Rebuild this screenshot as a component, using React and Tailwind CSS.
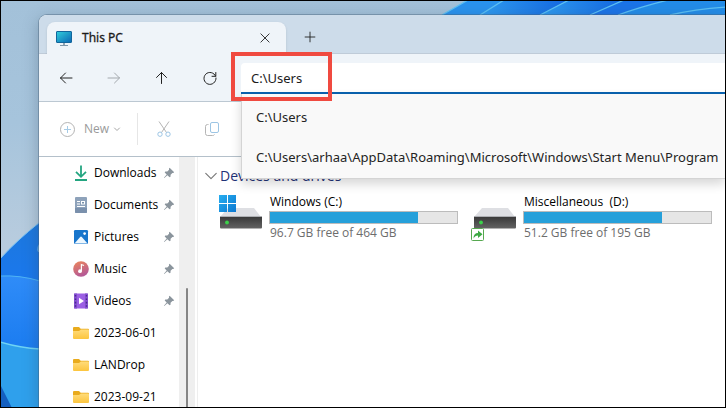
import React from "react";

function Wallpaper() {
  return (
    <svg className="absolute inset-0 h-full w-full" viewBox="1 1 724 406" preserveAspectRatio="xMinYMin slice" aria-hidden="true">
      <defs>
        <linearGradient id="sky" x1="0" y1="0" x2="0" y2="1">
          <stop offset="0" stopColor="#a3c1d9" />
          <stop offset="0.3" stopColor="#a6c4dc" />
          <stop offset="0.6" stopColor="#b8ccde" />
        </linearGradient>
        <linearGradient id="petal" x1="0" y1="0" x2="0" y2="1">
          <stop offset="0" stopColor="#1d78dc" />
          <stop offset="1" stopColor="#1a78f0" />
        </linearGradient>
        <linearGradient id="petalMid" x1="0" y1="0" x2="0" y2="1">
          <stop offset="0" stopColor="#2f8cf8" />
          <stop offset="1" stopColor="#1b7cf0" />
        </linearGradient>
        <linearGradient id="sweep" x1="0" y1="0" x2="1" y2="0">
          <stop offset="0" stopColor="#2f9cf0" />
          <stop offset="1" stopColor="#1467e0" />
        </linearGradient>
      </defs>
      <rect width="726" height="408" fill="url(#sky)" />
      <path d="M0 259 Q16 241 40 222 V290 H0z" fill="url(#petal)" stroke="#7cc4f2" />
      <path d="M0 276 Q20 275 40 281 V350 H0z" fill="url(#petalMid)" />
      <path d="M0 276 Q20 275 40 281" fill="none" stroke="#4fb4f4" />
      <path d="M0 342 Q20 348 40 349 V408 H0z" fill="#2fa0ec" />
      <path d="M0 342 Q20 348 40 349" fill="none" stroke="#6fd4f4" strokeWidth="1.5" />
      <path d="M0 384 L12 408 H0z" fill="#145fc0" />
      <path d="M40 243 q-4 4 -2 9 h2z" fill="#6db4ea" />
      <path d="M442 15 L468 0 H726 V15z" fill="#2a93ee" />
      <path d="M480 15 L504 0 H569 L540 15z" fill="url(#sweep)" />
      <path d="M540 15 L569 0 H624 L590 15z" fill="url(#sweep)" />
      <path d="M590 15 L624 0 H668 L618 15z" fill="#1b74e8" />
      <path d="M618 15 L668 0 H726 V15z" fill="#238ce8" />
      <path d="M442 15 L468 0 M480 15 L504 0 M540 15 L569 0 M590 15 L624 0 M618 15 Q640 7 668 0 M670 15 Q695 9 726 7" fill="none" stroke="#5cc0f4" strokeWidth="1.3" />
    </svg>
  );
}

function MonitorIcon() {
  return (
    <svg width="16" height="16" viewBox="0 0 16 16" aria-hidden="true">
      <defs>
        <linearGradient id="screen" x1="0" y1="0" x2="1" y2="1">
          <stop offset="0" stopColor="#30cfdc" />
          <stop offset="1" stopColor="#0b66b4" />
        </linearGradient>
      </defs>
      <rect x="0.5" y="1.5" width="15" height="11" rx="0.5" fill="url(#screen)" stroke="#12659c" />
      <path d="M7 13h2v2H7z" fill="#8fa5b5" />
      <path d="M4 15h8v1H4z" fill="#7e96a8" />
    </svg>
  );
}

function LineIcon({ d, size = 16, color = "#222", width = 1 }) {
  return (
    <svg width={size} height={size} viewBox="0 0 16 16" fill="none" stroke={color} strokeWidth={width} strokeLinecap="round" strokeLinejoin="round" aria-hidden="true">
      <path d={d} />
    </svg>
  );
}

function PinIcon() {
  return (
    <svg width="12" height="12" viewBox="0 0 12 12" fill="#8b959d" aria-hidden="true">
      <path d="M6.6 0.8 L11.2 5.2 L10.2 6 L9.4 5.9 L7.6 7.8 L7.5 9.8 L6.6 10.3 L4.4 8.2 L1.3 11 L0.9 10.7 L3.7 7.5 L1.7 5.4 L2.3 4.6 L4.3 4.6 L6.1 2.7 L5.9 1.7z" />
    </svg>
  );
}

function DownloadsIcon() {
  return (
    <svg width="16" height="16" viewBox="0 0 16 16" fill="none" stroke="#23a580" strokeWidth="1.8" aria-hidden="true">
      <path d="M8 0.5v11M3 6.8l5 5 5-5M2 15h12" />
    </svg>
  );
}

function DocumentsIcon() {
  return (
    <svg width="16" height="16" viewBox="0 0 16 16" aria-hidden="true">
      <path d="M3 0h10a1 1 0 0 1 1 1v14a1 1 0 0 1-1 1H3a1 1 0 0 1-1-1V1a1 1 0 0 1 1-1z" fill="#8ea2ba" />
      <path d="M2 11h12v4a1 1 0 0 1-1 1H3a1 1 0 0 1-1-1z" fill="#7a90ac" />
      <path d="M4 4.500h3M4 7h3M4 9.500h8" stroke="#fff" strokeWidth="1.2" />
      <path d="M8 4h4v3.500H8z" fill="#fff" />
      <path d="M9 5h2v1.500H9z" fill="#7890aa" />
    </svg>
  );
}

function PicturesIcon() {
  return (
    <svg width="16" height="16" viewBox="0 0 16 16" aria-hidden="true">
      <rect x="1" y="1" width="14" height="14" rx="1.2" fill="#1976cc" />
      <path d="M1.500 14.500 L7.200 8 Q8 7.200 8.800 8 L14.500 14.500z" fill="#eef8ff" />
      <circle cx="11.600" cy="4.600" r="1.300" fill="#fff" />
    </svg>
  );
}

function MusicIcon() {
  return (
    <svg width="16" height="16" viewBox="0 0 16 16" aria-hidden="true">
      <defs>
        <linearGradient id="disc" x1="0" y1="0" x2="0.4" y2="1">
          <stop offset="0" stopColor="#ee8758" />
          <stop offset="1" stopColor="#b55a96" />
        </linearGradient>
      </defs>
      <circle cx="8" cy="8" r="7.8" fill="url(#disc)" />
      <circle cx="7" cy="10.2" r="1.9" fill="#fff" />
      <path d="M8.4 10V3.5l2.6 1" fill="none" stroke="#fff" strokeWidth="1.2" />
    </svg>
  );
}

function VideosIcon() {
  return (
    <svg width="16" height="16" viewBox="0 0 16 16" aria-hidden="true">
      <rect x="1" y="0.5" width="14" height="15" rx="1.2" fill="#9b5fe4" />
      <path d="M1 0.5h3v15H1zM12 0.5h3v15h-3z" fill="#8450cf" />
      <path d="M2.5 2v12M13.5 2v12" stroke="#4a2890" strokeWidth="1.4" strokeDasharray="1.6 1.8" />
      <path d="M6 4.8 L11 8 L6 11.2z" fill="#fff" />
    </svg>
  );
}

function FolderIcon() {
  return (
    <svg width="16" height="16" viewBox="0 0 16 16" aria-hidden="true">
      <defs>
        <linearGradient id="folder" x1="0" y1="0" x2="0" y2="1">
          <stop offset="0" stopColor="#ffdc7c" />
          <stop offset="1" stopColor="#fcc53e" />
        </linearGradient>
      </defs>
      <path d="M0 3a1 1 0 0 1 1-1h5l1.7 1.7H15a1 1 0 0 1 1 1V8H0z" fill="#e9ab1d" />
      <path d="M0 6h6l2-1.6h7a1 1 0 0 1 1 1V13a1 1 0 0 1-1 1H1a1 1 0 0 1-1-1z" fill="url(#folder)" />
    </svg>
  );
}

function DriveIcon({ badge }) {
  return (
    <svg className="overflow-visible" width="44" height="36" viewBox="0 0 44 36" aria-hidden="true">
      <defs>
        <linearGradient id="driveFront" x1="0" y1="0" x2="0" y2="1">
          <stop offset="0" stopColor="#3a3a3a" />
          <stop offset="1" stopColor="#646464" />
        </linearGradient>
        <linearGradient id="winLogo" x1="0" y1="0" x2="1" y2="1">
          <stop offset="0" stopColor="#27aef0" />
          <stop offset="1" stopColor="#0c78d0" />
        </linearGradient>
      </defs>
      <path d="M9 13h26l7 9H1z" fill="#dedfe3" />
      <path d="M1 22h42v10.500a1 1 0 0 1-1 1H2a1 1 0 0 1-1-1z" fill="url(#driveFront)" />
      <path d="M1 21.500h42" stroke="#aeb0b4" />
      <circle cx="8" cy="27.500" r="1.900" fill="#3bd14a" />
      {badge === "windows" && (
        <path d="M0 0h8v8H0zM9 0h8v8H9zM0 9h8v8H0zM9 9h8v8H9z" fill="url(#winLogo)" />
      )}
      {badge === "shared" && (
        <g>
          <rect x="-1.500" y="33.500" width="12" height="12" rx="1" fill="#fff" stroke="#56a850" />
          <path d="M0.500 43.500 Q0.500 38 5 38 V35.500 L9.500 39.300 L5 43 V40.500 Q2 40.500 0.500 43.500z" fill="#3ca943" />
        </g>
      )}
    </svg>
  );
}

const places = [
  { name: "Downloads", icon: DownloadsIcon, pinned: true },
  { name: "Documents", icon: DocumentsIcon, pinned: true },
  { name: "Pictures", icon: PicturesIcon, pinned: true },
  { name: "Music", icon: MusicIcon, pinned: true },
  { name: "Videos", icon: VideosIcon, pinned: true },
  { name: "2023-06-01", icon: FolderIcon },
  { name: "LANDrop", icon: FolderIcon },
  { name: "2023-09-21", icon: FolderIcon },
];

const drives = [
  { name: "Windows (C:)", free: "96.7 GB free of 464 GB", used: 79, badge: "windows" },
  { name: "Miscellaneous  (D:)", free: "51.2 GB free of 195 GB", used: 74, badge: "shared" },
];

const suggestions = [
  "C:\\Users",
  "C:\\Users\\arhaa\\AppData\\Roaming\\Microsoft\\Windows\\Start Menu\\Program",
];

function TitleBar() {
  return (
    <header className="flex h-[39px] shrink-0 items-end border-b border-[#bfcbd8] bg-[#cddcea] pl-2">
      <div className="-mb-px flex h-8 w-[239px] items-center rounded-t-lg bg-[#eff4f9] pr-[11px] pl-[9px] shadow-sm">
        <MonitorIcon />
        <h1 className="ml-[10px] flex-1 font-['Noto_Sans','Open_Sans',sans-serif] text-[12px] leading-4 text-[#1b1b1b] [-webkit-text-stroke:0.3px]">This PC</h1>
        <button type="button" aria-label="Close tab" className="flex size-5 items-center justify-center">
          <LineIcon size={12} width={1.2} d="M2.500 2.500l11 11M13.500 2.500l-11 11" />
        </button>
      </div>
      <button type="button" aria-label="New tab" className="ml-3 flex h-8 w-6 items-center justify-center">
        <LineIcon size={12} width={1.2} d="M8 1.500v13M1.500 8h13" />
      </button>
    </header>
  );
}

function NavButton({ label, d, color }) {
  return (
    <button type="button" aria-label={label} className="flex w-12 items-center justify-center">
      <LineIcon d={d} color={color} width={1} />
    </button>
  );
}

function NavBar() {
  return (
    <nav className="relative z-10 flex h-12 shrink-0 border-b border-[#bcc8d2] bg-[#eff4f9] pl-[3px]">
      <NavButton label="Back" d="M14 8H2.500M7.500 3l-5 5 5 5" />
      <NavButton label="Forward" d="M2 8h11.500M8.500 3l5 5-5 5" color="#a3a8ad" />
      <NavButton label="Up" d="M7.500 13.500V2.500M2.500 7.500l5-5 5 5" />
      <NavButton label="Refresh" d="M13.600 6.200A6 6 0 1 0 14 8M13.800 2.500v3.800H10" />
      <div className="relative ml-[7px] flex-1 pt-[9px] font-['Noto_Sans','Open_Sans',sans-serif]">
        <input
          aria-label="Address"
          type="text"
          defaultValue="C:\Users"
          className="h-[31px] w-full rounded-tl-sm border-b-2 border-[#0a63b0] bg-white px-[10px] text-[13px] leading-4 text-[#1b1b1b] outline-none"
        />
        <ul className="absolute top-10 right-0 left-0 h-[85px] overflow-hidden border-b border-l border-[#d4d4d4] bg-[#f9f9f9] pt-1 shadow-[0_5px_10px_rgba(0,0,0,0.16)]">
          {suggestions.map((s) => (
            <li key={s}>
              <button type="button" className="flex h-10 items-center pl-[14px] text-[13px] whitespace-nowrap text-[#242424]">{s}</button>
            </li>
          ))}
        </ul>
        <div className="pointer-events-none absolute -top-[2px] -left-[10px] h-[49px] w-[101px] border-4 border-[#f04a40]" />
      </div>
    </nav>
  );
}

function ToolBar() {
  return (
    <div className="flex h-[55px] shrink-0 items-center border-b border-[#b4c0ca] bg-white pl-5">
      <button type="button" className="flex items-center text-[12px] text-[#9a9a9a]">
        <svg width="17" height="17" viewBox="0 0 17 17" fill="none" aria-hidden="true">
          <circle cx="8.500" cy="8.500" r="7" stroke="#b3b3b3" />
          <path d="M8.500 5v7M5 8.500h7" stroke="#a6cbe6" />
        </svg>
        <span className="ml-2 w-6">New</span>
        <span className="ml-[5px]"><LineIcon size={8} width={2} color="#a5a5a5" d="M3 6l5 5 5-5" /></span>
      </button>
      <div className="ml-4 h-8 w-px bg-[#e6e6e6]" />
      <button type="button" aria-label="Cut" className="ml-[17px]">
        <svg width="18" height="18" viewBox="0 0 18 18" fill="none" aria-hidden="true">
          <path d="M4 1.500l7.500 11M14 1.500l-7.500 11" stroke="#b5b5b5" />
          <circle cx="5" cy="14.200" r="2.200" stroke="#9cc5e4" />
          <circle cx="13" cy="14.200" r="2.200" stroke="#9cc5e4" />
        </svg>
      </button>
      <button type="button" aria-label="Copy" className="ml-[30px]">
        <svg width="18" height="18" viewBox="0 0 18 18" fill="none" aria-hidden="true">
          <rect x="7.500" y="2.500" width="8" height="10" rx="1.500" stroke="#9cc5e4" />
          <path d="M5.500 4.500H4.500a2 2 0 0 0-2 2v7a2 2 0 0 0 2 2h5a2 2 0 0 0 2-1" stroke="#b5b5b5" />
        </svg>
      </button>
    </div>
  );
}

function Sidebar() {
  return (
    <aside className="flex w-[159px] shrink-0 border-r border-[#eeeeee]">
      <ul className="flex-1 pl-[34px]">
        {places.map(({ name, icon: Icon, pinned }) => (
          <li key={name}>
            <a href="#" className="flex h-8 items-center pr-1 text-[12px] whitespace-nowrap text-black">
              <Icon />
              <span className="ml-[5px] flex-1">{name}</span>
              {pinned && <PinIcon />}
            </a>
          </li>
        ))}
      </ul>
      <div className="mr-[2px] w-4 bg-[#efefef] pt-[131px]">
        <div className="ml-[7px] h-full w-[2px] rounded-t bg-[#858585]" />
      </div>
    </aside>
  );
}

function Drive({ name, free, used, badge }) {
  return (
    <li className="flex w-[254px] shrink-0">
      <DriveIcon badge={badge} />
      <div className="ml-[6px] w-[189px]">
        <p className="h-4 pl-px text-[12px] leading-[14px] whitespace-pre text-black">{name}</p>
        <div role="meter" aria-label={name} aria-valuenow={used} aria-valuemin={0} aria-valuemax={100} className="h-[13px] border border-[#bcbcbc] bg-[#e6e6e6]">
          <div className="h-full bg-[#26a0da]" style={{ width: `${used}%` }} />
        </div>
        <p className="mt-px pl-px text-[12px] leading-4 text-[#6d6d6d]">{free}</p>
      </div>
    </li>
  );
}

export default function App() {
  return (
    <div className="relative h-screen overflow-hidden border border-black font-['Open_Sans','Noto_Sans',sans-serif]">
      <Wallpaper />
      <main className="relative flex h-full flex-col pt-[14px] pl-[38px]">
        <div className="flex min-h-0 flex-1 flex-col overflow-hidden rounded-tl-lg bg-white shadow-[0_0_0_1px_rgba(70,95,120,0.4),0_4px_16px_rgba(50,70,90,0.35)]">
          <TitleBar />
          <NavBar />
          <ToolBar />
          <div className="flex min-h-0 flex-1 overflow-hidden">
            <Sidebar />
            <section className="flex-1 pt-2 pl-[6px]">
              <h2 className="flex items-center text-[14px] leading-[22px] text-[#1f3278]">
                <LineIcon size={14} width={1.300} color="#777" d="M2 5l6 6 6-6" />
                <span className="ml-[2px]">Devices and drives</span>
              </h2>
              <ul className="mt-2 flex pl-[15px]">
                {drives.map((drive) => (
                  <Drive key={drive.name} {...drive} />
                ))}
              </ul>
            </section>
          </div>
        </div>
      </main>
    </div>
  );
}
